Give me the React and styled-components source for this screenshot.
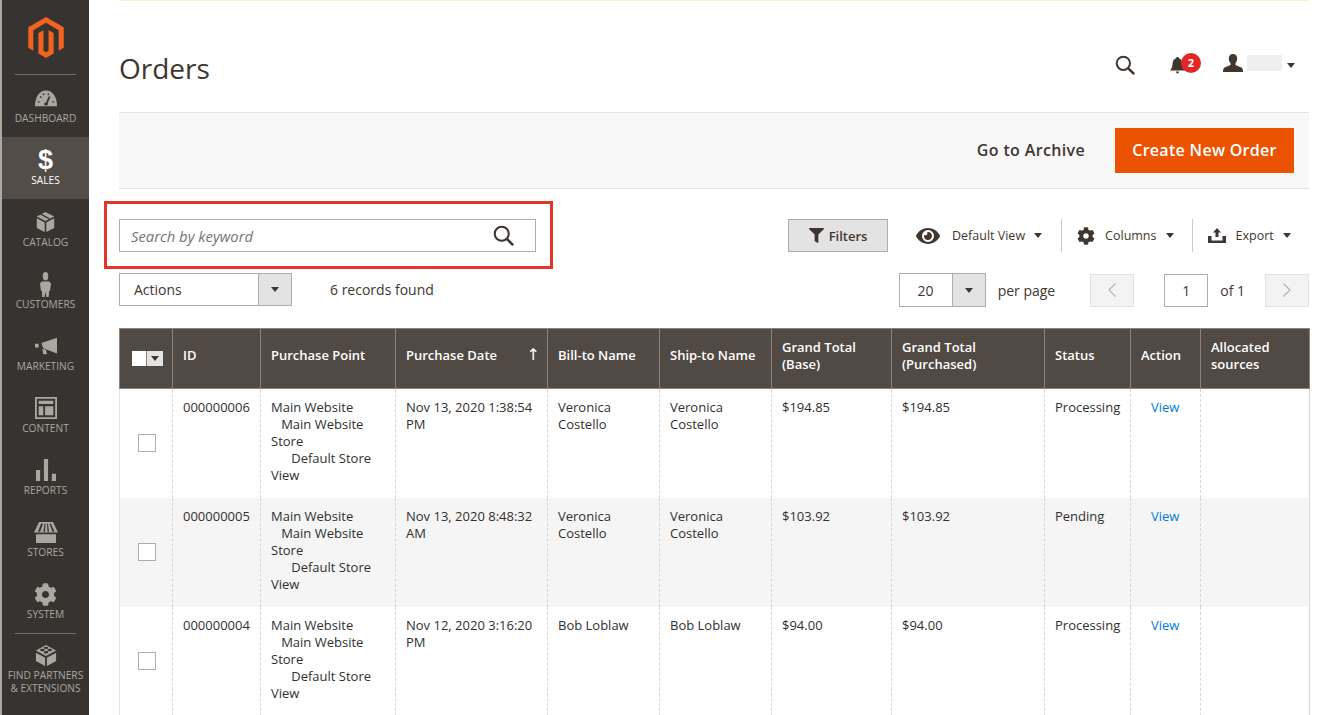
import React from 'react';
import styled, { createGlobalStyle } from 'styled-components';
import { FaCog, FaEye, FaFilter } from 'react-icons/fa';

const GlobalStyle = createGlobalStyle`
    html, body {
        margin: 0;
        padding: 0;
        background: #fff;
    }

    body {
        font-family: "Open Sans", "Liberation Sans", sans-serif;
        font-size: 14px;
        color: #41362f;
    }
`;

const Page = styled.div`
    display: flex;
    width: 1337px;
    height: 715px;
    overflow: hidden;
`;

const Sidebar = styled.nav`
    flex: 0 0 89px;
    width: 89px;
    box-sizing: border-box;
    background: #373330;
    border-left: 2px solid #a9a9a5;
`;

const LogoBox = styled.div`
    height: 75px;
    margin: 0 13px;
    box-sizing: border-box;
    display: flex;
    justify-content: center;
    padding-top: 17px;
    border-bottom: 1px solid #736d67;
`;

const MenuItem = styled.div`
    height: 62px;
    display: flex;
    flex-direction: column;
    align-items: center;
    background: ${p => (p.$active ? '#524d49' : 'transparent')};
    color: ${p => (p.$active ? '#ffffff' : '#aaa6a0')};
`;

const MenuIcon = styled.div`
    height: 26px;
    margin-top: 10px;
    display: flex;
    align-items: center;
    justify-content: center;
`;

const Dollar = styled.span`
    font-family: "Liberation Sans", sans-serif;
    font-size: 27px;
    font-weight: 700;
    line-height: 26px;
`;

const MenuLabel = styled.div`
    font-size: 10.2px;
    line-height: 14px;
    text-transform: uppercase;
    text-align: center;
`;

const Divider = styled.div`
    margin: 0 13px;
    height: 1px;
    background: #736d67;
`;

const PartnerBlock = styled.div`
    padding-top: 10px;
    display: flex;
    flex-direction: column;
    align-items: center;
    color: #aaa6a0;
`;

const PartnerLabel = styled.div`
    margin-top: 3px;
    font-size: 10.2px;
    line-height: 13px;
    text-transform: uppercase;
    text-align: center;
    white-space: nowrap;
`;

const Main = styled.main`
    flex: 1;
    min-width: 0;
    position: relative;
    padding: 0 28px 0 30px;
`;

const Notice = styled.div`
    height: 1px;
    background: #fdf0c8;
`;

const Header = styled.header`
    height: 111px;
    box-sizing: border-box;
    padding-top: 45px;
    display: flex;
    justify-content: space-between;
    align-items: flex-start;
`;

const Title = styled.h1`
    margin: 0;
    font-size: 28px;
    font-weight: 400;
    line-height: 44px;
    color: #41362f;
`;

const HeaderTools = styled.div`
    display: flex;
    align-items: center;
    height: 38px;
    margin-right: 14px;
    color: #41362f;
`;

const BellWrap = styled.div`
    position: relative;
    margin-left: 35px;
    margin-right: 38px;
    width: 15px;
    height: 16px;
    display: flex;
`;

const Badge = styled.span`
    position: absolute;
    left: 11px;
    top: -4px;
    width: 20px;
    height: 20px;
    border-radius: 50%;
    background: #e22626;
    color: #fff;
    font-size: 11px;
    font-weight: 700;
    line-height: 20px;
    text-align: center;
`;

const UserWrap = styled.div`
    display: flex;
    margin-bottom: 4px;
`;

const BlurName = styled.div`
    width: 35px;
    height: 16px;
    margin: 0 5px 4px 4px;
    background: #efefef;
`;

const Caret = styled.span`
    display: inline-block;
    width: 0;
    height: 0;
    border-left: ${p => p.$size || 4}px solid transparent;
    border-right: ${p => p.$size || 4}px solid transparent;
    border-top: ${p => (p.$size || 4) + 1}px solid #41362f;
`;

const ActionBar = styled.div`
    height: 77px;
    box-sizing: border-box;
    display: flex;
    align-items: center;
    justify-content: flex-end;
    padding-right: 15px;
    background: #f8f8f8;
    border-top: 1px solid #e3e3e3;
    border-bottom: 1px solid #e3e3e3;
`;

const ArchiveLink = styled.span`
    margin: 0 30px 2px 0;
    font-size: 16px;
    font-weight: 600;
    letter-spacing: 0.35px;
    color: #41362f;
`;

const PrimaryButton = styled.button`
    width: 179px;
    height: 45px;
    border: 0;
    padding: 0 0 2px;
    background: #eb5202;
    color: #fff;
    font-family: inherit;
    font-size: 16px;
    font-weight: 600;
    letter-spacing: 0.3px;
`;

const ToolRow = styled.div`
    margin-top: 30px;
    height: 33px;
    display: flex;
    align-items: center;
`;

const SearchBox = styled.div`
    flex: 0 0 417px;
    height: 33px;
    box-sizing: border-box;
    display: flex;
    align-items: center;
    justify-content: space-between;
    padding: 0 21px 0 11px;
    border: 1px solid #adadad;
    font-size: 14.8px;
    font-style: italic;
    color: #757575;
`;

const Highlight = styled.div`
    position: absolute;
    left: 15px;
    top: 201px;
    width: 449px;
    height: 68px;
    box-sizing: border-box;
    border: 3px solid #e4352b;
`;

const FilterButton = styled.button`
    flex: 0 0 100px;
    margin-left: 252px;
    height: 33px;
    box-sizing: border-box;
    display: flex;
    align-items: center;
    justify-content: center;
    gap: 5px;
    padding: 0;
    background: #e3e3e3;
    border: 1px solid #adadad;
    font-family: inherit;
    font-size: 13px;
    font-weight: 600;
    color: #41362f;
`;

const ToolMenu = styled.div`
    display: flex;
    align-items: center;
    height: 33px;
    font-size: 12.5px;
    color: #41362f;
    margin-left: ${p => p.$left}px;
    padding-left: ${p => p.$pad || 0}px;
    border-left: ${p => (p.$divider ? '1px solid #cccccc' : '0')};
`;

const ToolText = styled.span`
    margin: 0 9px 0 ${p => p.$gap}px;
    white-space: nowrap;
`;

const PagerRow = styled.div`
    margin-top: 21px;
    height: 34px;
    display: flex;
    align-items: center;
`;

const SelectBox = styled.div`
    display: flex;
    height: ${p => p.$height || 34}px;
    align-self: flex-start;
    box-sizing: border-box;
    width: ${p => p.$width}px;
    border: 1px solid #adadad;
    font-size: 14px;
`;

const SelectValue = styled.div`
    flex: 1;
    display: flex;
    align-items: center;
    justify-content: ${p => (p.$center ? 'center' : 'flex-start')};
    padding-left: ${p => (p.$center ? 0 : 14)}px;
`;

const SelectArrow = styled.div`
    width: 32px;
    background: #e3e3e3;
    border-left: 1px solid #adadad;
    display: flex;
    align-items: center;
    justify-content: center;
`;

const PlainText = styled.span`
    font-size: 14px;
    color: #41362f;
    margin-left: ${p => p.$left}px;
    margin-bottom: ${p => p.$raise || 0}px;
    white-space: nowrap;
`;

const Spacer = styled.div`
    flex: 1;
`;

const PageButton = styled.div`
    flex: 0 0 44px;
    height: 33px;
    box-sizing: border-box;
    margin-left: ${p => p.$left}px;
    display: flex;
    align-items: center;
    justify-content: center;
    background: #f3f3f3;
    border: 1px solid #e3e3e3;
    color: #b5b2ae;
`;

const PageInput = styled.div`
    flex: 0 0 44px;
    height: 33px;
    box-sizing: border-box;
    margin-left: ${p => p.$left}px;
    display: flex;
    align-items: center;
    justify-content: center;
    border: 1px solid #adadad;
    font-size: 14px;
`;

const Grid = styled.table`
    margin-top: 21px;
    width: 1190px;
    table-layout: fixed;
    border-collapse: collapse;
    font-size: 13px;
    line-height: 17px;
    color: #303030;
`;

const HeadCell = styled.th`
    height: 60px;
    box-sizing: border-box;
    padding: 0 10px 6px;
    background: #514943;
    border: 1px solid #8a837f;
    color: #fff;
    font-weight: 600;
    text-align: left;
    vertical-align: middle;
    position: relative;
`;

const SortArrow = styled.span`
    position: absolute;
    right: 7px;
    top: 17px;
    font-family: "DejaVu Sans", sans-serif;
    font-size: 16px;
    font-weight: 400;
`;

const MassSelect = styled.div`
    display: flex;
    width: 31px;
    height: 15px;
    margin: 6px 0 0 2px;
    background: #fff;
`;

const MassArrow = styled.div`
    margin-left: auto;
    width: 16px;
    background: #e3e3e3;
    display: flex;
    align-items: center;
    justify-content: center;
    border-left: 1px solid #8a837f;
`;

const Row = styled.tr`
    background: ${p => (p.$even ? '#f5f5f5' : '#fff')};
`;

const Cell = styled.td`
    height: 109px;
    box-sizing: border-box;
    padding: 10px 10px 14px;
    vertical-align: top;
    border-left: 1px dashed #d6d6d6;
    border-right: 1px dashed #d6d6d6;

    &:first-child {
        border-left: 1px solid #e3e3e3;
        padding: 0 0 2px 1px;
        vertical-align: middle;
    }

    &:last-child {
        border-right: 1px solid #d6d6d6;
    }
`;

const RowCheck = styled.div`
    width: 16px;
    height: 16px;
    margin: 0 auto;
    background: #fff;
    border: 1px solid #adadad;
`;

const ViewLink = styled.a`
    display: block;
    padding-left: 10px;
    color: #007bdb;
`;

const SvgIcon = ({ width, height, children, fill = 'currentColor' }) => (
    <svg width={width} height={height} viewBox="0 0 24 24" preserveAspectRatio="none" fill={fill}>
        {children}
    </svg>
);

const Magnifier = ({ size }) => (
    <svg width={size} height={size} viewBox="0 0 24 24" fill="none" stroke="#41362f">
        <circle cx="10" cy="10" r="8" strokeWidth="2.4" />
        <path d="M16 16l7 7" strokeWidth="3" />
    </svg>
);

const Logo = () => (
    <svg width="36" height="41" viewBox="1.6 0 20.8 24" fill="#f26322">
        <path d="M12 24l-4.455-2.572v-12l2.97-1.715v12.001L12 20.572l1.485-.858V7.713l2.971 1.715v12L12 24zM22.391 6v12l-2.969 1.714V7.713L12 3.428 4.574 7.713v12.001L1.609 18V6L12 0l10.391 6z" />
    </svg>
);

const BellIcon = () => (
    <svg width="15" height="17" viewBox="0 0 15 17" fill="#41362f">
        <path d="M7.500 0c.8 0 1.300.5 1.400 1.300C11 2 12.200 3.800 12.400 6.500c.2 3 .8 5 2.600 7H0c1.800-2 2.400-4 2.600-7C2.800 3.800 4 2 6.100 1.300 6.200.5 6.700 0 7.500 0z" />
        <path d="M6 14.500h3a1.500 2 0 0 1-3 0z" />
    </svg>
);

const UserIcon = () => (
    <svg width="20" height="18" viewBox="0 0 20 18" fill="#41362f">
        <path d="M10 0c2.700 0 4.200 2 4.200 4.600 0 1.900-.8 3.600-1.800 4.600v1.300c0 1 3.200 1.700 5.500 2.800 1.400.7 2.100 1.700 2.100 4.700H0c0-3 .7-4 2.100-4.700 2.300-1.100 5.500-1.800 5.500-2.800V9.200c-1-1-1.800-2.700-1.800-4.600C5.800 2 7.300 0 10 0z" />
    </svg>
);

const icons = {
    dashboard: (
        <SvgIcon width={22} height={18}>
            <path d="M0 23C0 10 5 2 12 2s12 8 12 21z" />
            <path d="M12 21l4-11" stroke="#373330" strokeWidth="2" />
            <circle cx="12" cy="20" r="2" fill="#373330" />
            <path d="M3 17l2 .5M5.500 10l1.500 1.500M9 6l.8 2M15 6l-.8 2M21 17l-2 .5" stroke="#373330" strokeWidth="1.500" />
        </SvgIcon>
    ),
    catalog: (
        <SvgIcon width={19} height={22}>
            <path d="M12 1l11 5-11 5L1 6z" />
            <path d="M1 8l10 4.500V23L1 18.500zM23 8l-10 4.500V23l10-4.500z" />
            <path d="M6 3.500l11 5" stroke="#373330" strokeWidth="1.500" />
        </SvgIcon>
    ),
    customers: (
        <SvgIcon width={11} height={25}>
            <ellipse cx="12" cy="4" rx="6" ry="4" />
            <path d="M4 9h16l4 2-2 7h-2l-1 6h-5l-2-5-2 5H5l-1-6H2L0 11z" />
        </SvgIcon>
    ),
    marketing: (
        <SvgIcon width={22} height={18}>
            <path d="M7 8l17-7v21L9 15z" />
            <path d="M0 9h4v5H0z" />
            <path d="M8 16l4 1 1 6H9z" />
        </SvgIcon>
    ),
    content: (
        <SvgIcon width={22} height={22}>
            <path fillRule="evenodd" d="M0 0h24v24H0zM2 2v20h20V2z" />
            <path d="M4 4h16v3.500H4zM4 10h5v10H4zM11 10h9v10h-9z" />
        </SvgIcon>
    ),
    reports: (
        <SvgIcon width={20} height={22}>
            <path d="M0 12h5v12H0zM9.500 0h5v24h-5zM19 16h5v8h-5z" />
        </SvgIcon>
    ),
    stores: (
        <SvgIcon width={24} height={21}>
            <path fillRule="evenodd" d="M5 0h14l5 12H0zM7 2L4 11h2l3-9zM10.500 2L9.500 11h1.500l.5-9zM13 2l.5 9H15l-1-9zM15.500 2l3 9h2L17 2z" />
            <path d="M2 14h20v10H2z" />
        </SvgIcon>
    ),
    partners: (
        <SvgIcon width={22} height={22}>
            <path d="M12 1l11 6-11 6L1 7z" />
            <path d="M1 9.500l10 5.500v9L1 18.500zM23 9.500L13 15v9l10-5.500z" />
            <ellipse cx="8" cy="6.500" rx="2.500" ry="1.300" fill="#373330" />
            <ellipse cx="16" cy="6.500" rx="2.500" ry="1.300" fill="#373330" />
            <ellipse cx="12" cy="4.200" rx="2.500" ry="1.300" fill="#373330" />
            <ellipse cx="12" cy="9" rx="2.500" ry="1.300" fill="#373330" />
        </SvgIcon>
    ),
};

const menu = [
    { label: 'Dashboard', icon: icons.dashboard },
    { label: 'Sales', icon: <Dollar>$</Dollar>, active: true },
    { label: 'Catalog', icon: icons.catalog },
    { label: 'Customers', icon: icons.customers },
    { label: 'Marketing', icon: icons.marketing },
    { label: 'Content', icon: icons.content },
    { label: 'Reports', icon: icons.reports },
    { label: 'Stores', icon: icons.stores },
    { label: 'System', icon: <FaCog size={23} /> },
];

const columns = [
    { width: 53 },
    { width: 88, label: 'ID' },
    { width: 135, label: 'Purchase Point' },
    { width: 152, label: 'Purchase Date', sorted: true },
    { width: 112, label: 'Bill-to Name' },
    { width: 112, label: 'Ship-to Name' },
    { width: 120, label: <>Grand Total<br />(Base)</> },
    { width: 153, label: <>Grand Total<br />(Purchased)</> },
    { width: 86, label: 'Status' },
    { width: 70, label: 'Action' },
    { width: 109, label: <>Allocated<br />sources</> },
];

const orders = [
    { id: '000000006', date: 'Nov 13, 2020 1:38:54 PM', name: 'Veronica Costello', total: '$194.85', status: 'Processing' },
    { id: '000000005', date: 'Nov 13, 2020 8:48:32 AM', name: 'Veronica Costello', total: '$103.92', status: 'Pending' },
    { id: '000000004', date: 'Nov 12, 2020 3:16:20 PM', name: 'Bob Loblaw', total: '$94.00', status: 'Processing' },
];

const PurchasePoint = () => (
    <>
        Main Website<br />
        &nbsp;&nbsp;&nbsp;Main Website Store<br />
        &nbsp;&nbsp;&nbsp;&nbsp;&nbsp;&nbsp;Default Store View
    </>
);

const Chevron = ({ left }) => (
    <svg width="10" height="16" viewBox="0 0 10 16" fill="none" stroke="currentColor" strokeWidth="1.2">
        <path d={left ? 'M8.500 1.500L2 8l6.500 6.500' : 'M1.500 1.500L8 8l-6.500 6.500'} />
    </svg>
);

const ExportIcon = () => (
    <svg width="18" height="15" viewBox="0 0 18 15" fill="#41362f">
        <path d="M9 0l4 4.500h-2.500V9h-3V4.500H5z" />
        <path d="M0 8h3.500v4.500h11V8H18v7H0z" />
    </svg>
);

export default function App() {
    return (
        <Page>
            <GlobalStyle />
            <Sidebar>
                <LogoBox><Logo /></LogoBox>
                {menu.map(item => (
                    <MenuItem key={item.label} $active={item.active}>
                        <MenuIcon>{item.icon}</MenuIcon>
                        <MenuLabel>{item.label}</MenuLabel>
                    </MenuItem>
                ))}
                <Divider />
                <PartnerBlock>
                    {icons.partners}
                    <PartnerLabel>Find Partners<br />&amp; Extensions</PartnerLabel>
                </PartnerBlock>
            </Sidebar>
            <Main>
                <Notice />
                <Header>
                    <Title>Orders</Title>
                    <HeaderTools>
                        <Magnifier size={20} />
                        <BellWrap>
                            <BellIcon />
                            <Badge>2</Badge>
                        </BellWrap>
                        <UserWrap><UserIcon /></UserWrap>
                        <BlurName />
                        <Caret />
                    </HeaderTools>
                </Header>
                <ActionBar>
                    <ArchiveLink>Go to Archive</ArchiveLink>
                    <PrimaryButton>Create New Order</PrimaryButton>
                </ActionBar>
                <ToolRow>
                    <SearchBox>
                        Search by keyword
                        <Magnifier size={21} />
                    </SearchBox>
                    <FilterButton><FaFilter size={15} />Filters</FilterButton>
                    <ToolMenu $left={28}>
                        <FaEye size={24} />
                        <ToolText $gap={12}>Default View</ToolText>
                        <Caret />
                    </ToolMenu>
                    <ToolMenu $left={19} $pad={15} $divider>
                        <FaCog size={18} />
                        <ToolText $gap={10}>Columns</ToolText>
                        <Caret />
                    </ToolMenu>
                    <ToolMenu $left={18} $pad={15} $divider>
                        <ExportIcon />
                        <ToolText $gap={10}>Export</ToolText>
                        <Caret />
                    </ToolMenu>
                </ToolRow>
                <PagerRow>
                    <SelectBox $width={173} $height={33}>
                        <SelectValue>Actions</SelectValue>
                        <SelectArrow><Caret /></SelectArrow>
                    </SelectBox>
                    <PlainText $left={38} $raise={1}>6 records found</PlainText>
                    <Spacer />
                    <SelectBox $width={87}>
                        <SelectValue $center>20</SelectValue>
                        <SelectArrow><Caret /></SelectArrow>
                    </SelectBox>
                    <PlainText $left={12}>per page</PlainText>
                    <PageButton $left={35}><Chevron left /></PageButton>
                    <PageInput $left={30}>1</PageInput>
                    <PlainText $left={12}>of 1</PlainText>
                    <PageButton $left={20}><Chevron /></PageButton>
                </PagerRow>
                <Grid>
                    <colgroup>
                        {columns.map((col, i) => <col key={i} width={col.width} />)}
                    </colgroup>
                    <thead>
                        <tr>
                            {columns.map((col, i) => (
                                <HeadCell key={i}>
                                    {i === 0 ? (
                                        <MassSelect>
                                            <MassArrow><Caret /></MassArrow>
                                        </MassSelect>
                                    ) : col.label}
                                    {col.sorted && <SortArrow>↑</SortArrow>}
                                </HeadCell>
                            ))}
                        </tr>
                    </thead>
                    <tbody>
                        {orders.map((order, i) => (
                            <Row key={order.id} $even={i % 2 === 1}>
                                <Cell><RowCheck /></Cell>
                                <Cell>{order.id}</Cell>
                                <Cell><PurchasePoint /></Cell>
                                <Cell>{order.date}</Cell>
                                <Cell>{order.name}</Cell>
                                <Cell>{order.name}</Cell>
                                <Cell>{order.total}</Cell>
                                <Cell>{order.total}</Cell>
                                <Cell>{order.status}</Cell>
                                <Cell><ViewLink>View</ViewLink></Cell>
                                <Cell />
                            </Row>
                        ))}
                    </tbody>
                </Grid>
                <Highlight />
            </Main>
        </Page>
    );
}
